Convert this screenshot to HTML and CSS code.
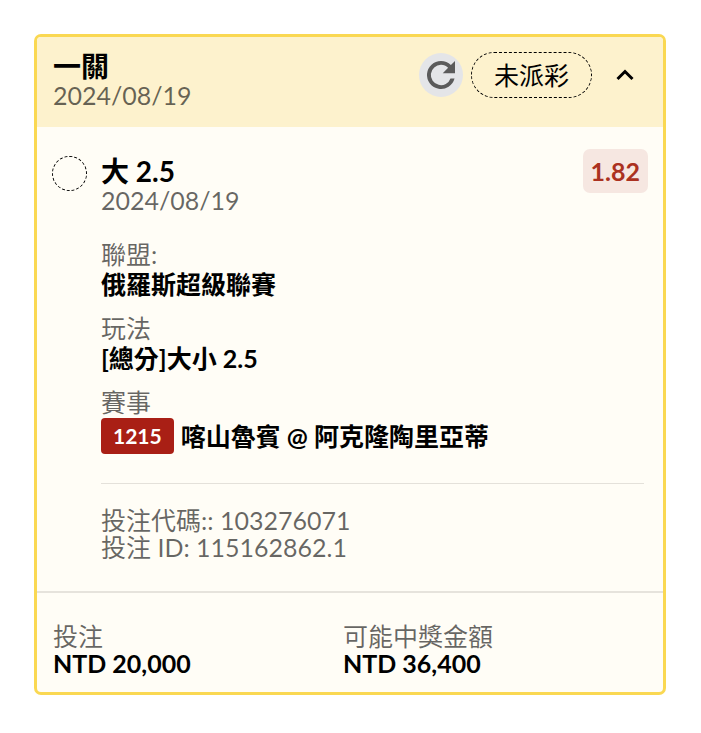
FILE: index.html
```html
<!DOCTYPE html>
<html lang="zh-Hant">
<head>
<meta charset="utf-8">
<meta name="viewport" content="width=device-width, initial-scale=1">
<title>一關</title>
<link rel="stylesheet" href="styles.css">
</head>
<body>
<article class="card">
  <header class="card-header">
    <div class="heading">
      <h1 class="title">一關</h1>
      <time class="date" datetime="2024-08-19">2024/08/19</time>
    </div>
    <div class="actions">
      <button class="refresh" type="button" aria-label="重新整理">
        <svg class="refresh-icon" viewBox="0 0 24 24" aria-hidden="true"><path d="M17.65 6.35A7.96 7.96 0 0 0 12 4a8 8 0 1 0 7.73 10h-2.3A5.8 5.8 0 1 1 12 6.2c1.6 0 3 .65 4.08 1.72L13 11h7V4z"/></svg>
      </button>
      <span class="status">未派彩</span>
      <button class="toggle" type="button" aria-label="收合" aria-expanded="true">
        <svg class="toggle-icon" viewBox="0 0 18 12" aria-hidden="true"><path d="M1.5 10 9 2.5l7.5 7.5"/></svg>
      </button>
    </div>
  </header>
  <section class="bet">
    <span class="marker"></span>
    <div class="bet-main">
      <div class="bet-head">
        <div class="heading">
          <h2 class="title">大 2.5</h2>
          <time class="date" datetime="2024-08-19">2024/08/19</time>
        </div>
        <span class="odds">1.82</span>
      </div>
      <dl class="details">
        <div class="field">
          <dt>聯盟:</dt>
          <dd>俄羅斯超級聯賽</dd>
        </div>
        <div class="field">
          <dt>玩法</dt>
          <dd>[總分]大小 2.5</dd>
        </div>
        <div class="field">
          <dt>賽事</dt>
          <dd class="match"><span class="code">1215</span><span>喀山魯賓 @ 阿克隆陶里亞蒂</span></dd>
        </div>
      </dl>
      <div class="reference">
        <p>投注代碼:: 103276071</p>
        <p>投注 ID: 115162862.1</p>
      </div>
    </div>
  </section>
  <footer class="card-footer">
    <dl class="totals">
      <div>
        <dt>投注</dt>
        <dd>NTD 20,000</dd>
      </div>
      <div>
        <dt>可能中獎金額</dt>
        <dd>NTD 36,400</dd>
      </div>
    </dl>
  </footer>
</article>
</body>
</html>
```
FILE: styles.css
```css
* {
  box-sizing: border-box;
}

body {
  margin: 0;
  padding: 34px 35px 34px 34px;
  background: #fff;
  color: #000;
  font: 25px/30px Lato, "Noto Sans CJK TC", sans-serif;
}

h1, h2, p, dl, dd {
  margin: 0;
}

button {
  padding: 0;
  border: 0;
  background: none;
  color: inherit;
  cursor: pointer;
}

svg {
  display: block;
}

.card {
  overflow: hidden;
  border: 3px solid #fad852;
  border-radius: 7px;
  background: #fffdf6;
}

.card-header {
  display: flex;
  justify-content: space-between;
  padding: 14px 28px 18px 16px;
  background: #fdf2cd;
}

.title {
  font-size: 28px;
  line-height: 30px;
  font-weight: 700;
}

.date {
  display: block;
  color: rgba(0, 0, 0, 0.6);
  line-height: 28px;
}

.actions {
  display: flex;
  align-items: center;
  align-self: flex-start;
  padding-top: 1px;
}

.refresh {
  display: grid;
  place-items: center;
  width: 44px;
  height: 44px;
  margin-right: 8px;
  border-radius: 50%;
  background: #e4e5e8;
}

.refresh-icon {
  width: 42px;
  height: 42px;
  fill: #5b5b5b;
}

.status {
  padding: 7px 22px;
  border: 1px dashed #000;
  border-radius: 23px;
}

.toggle {
  margin-left: 23px;
}

.toggle-icon {
  width: 20px;
  height: 12px;
  fill: none;
  stroke: #000;
  stroke-width: 3;
}

.bet {
  display: flex;
  gap: 14px;
  padding: 22px 15px 30px;
}

.marker {
  flex: none;
  width: 35px;
  height: 35px;
  margin-top: 7px;
  border: 1px dashed #000;
  border-radius: 50%;
}

.bet-main {
  flex: 1;
}

.bet-head {
  display: flex;
  justify-content: space-between;
  align-items: flex-start;
}

.bet-head .heading {
  padding-top: 7px;
}

.odds {
  padding: 7px 8px;
  border-radius: 7px;
  background: #f6e7e1;
  color: #ab3120;
  font-weight: 700;
}

.details {
  display: grid;
  gap: 14px;
  margin-right: 4px;
  padding: 25px 0 29px;
  border-bottom: 1px solid #e4e1da;
}

dt {
  color: rgba(0, 0, 0, 0.6);
}

dd {
  font-weight: 700;
}

.match {
  display: flex;
  align-items: center;
  gap: 7px;
  padding-top: 1px;
}

.code {
  padding: 3px 12px;
  border-radius: 4px;
  background: #a91f15;
  color: #fff;
  font-size: 21px;
}

.reference {
  padding-top: 23px;
  color: rgba(0, 0, 0, 0.6);
  line-height: 27px;
}

.card-footer {
  padding: 30px 16px 15px;
  border-top: 2px solid #e6e3dc;
}

.totals {
  display: grid;
  grid-template-columns: 290px 1fr;
  line-height: 27px;
}
```
